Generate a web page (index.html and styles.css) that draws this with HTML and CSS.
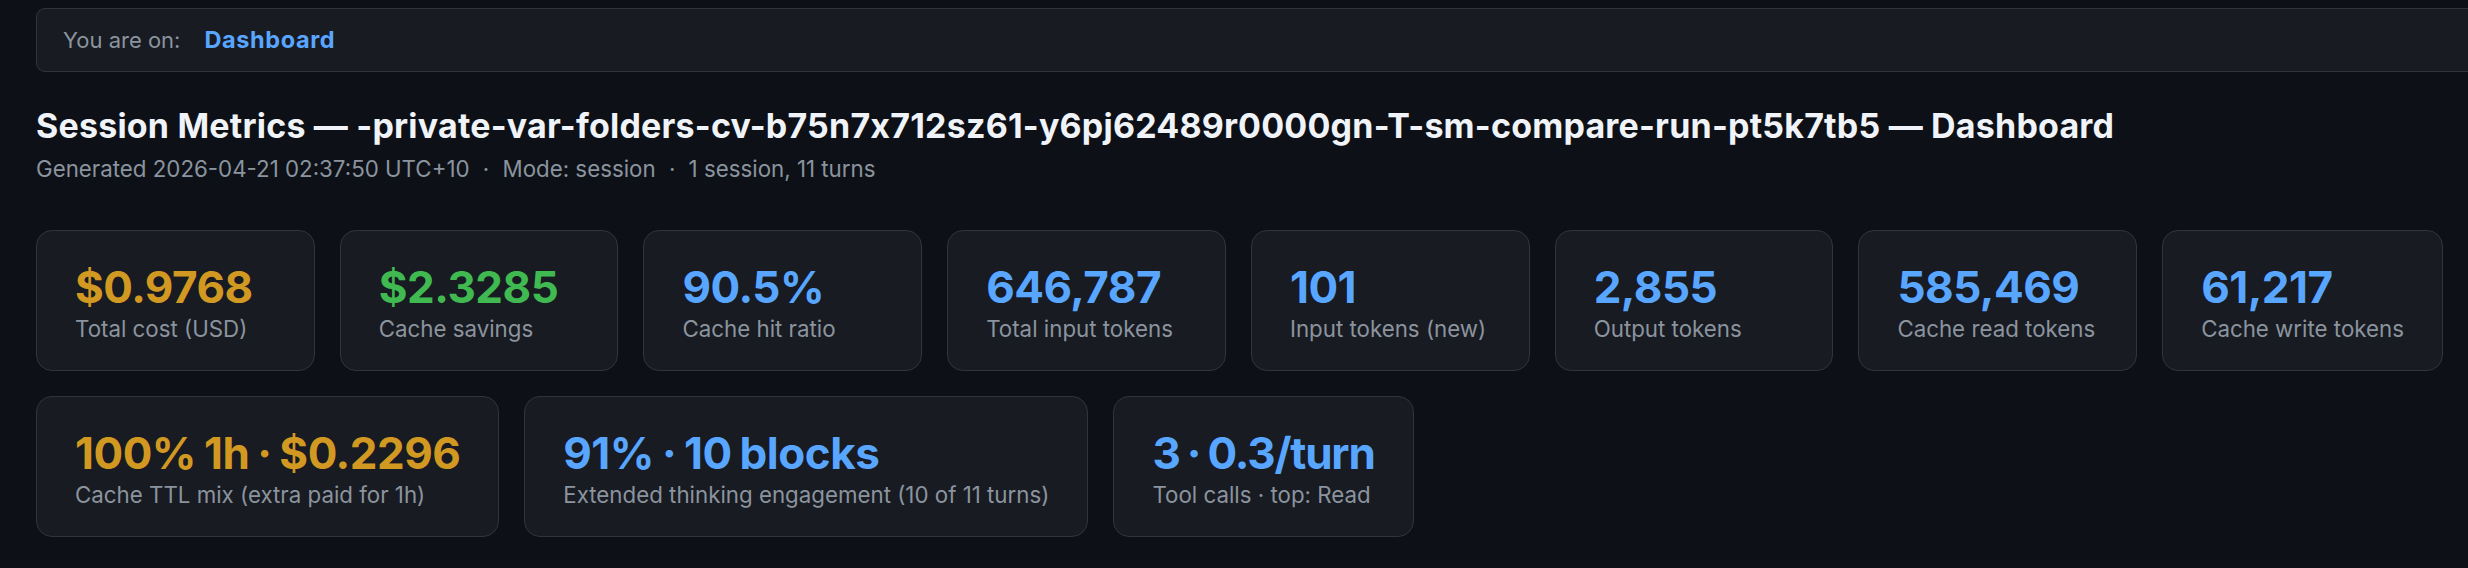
FILE: index.html
```html
<!DOCTYPE html>
<html lang="en">
<head>
<meta charset="utf-8">
<title>Session Metrics — Dashboard</title>
<link rel="stylesheet" href="styles.css">
</head>
<body>
<div class="page">
  <nav class="crumb">
    <span class="crumb-label">You are on:</span>
    <span class="crumb-current">Dashboard</span>
  </nav>

  <header class="head">
    <h1 class="title">Session Metrics — -private-var-folders-cv-b75n7x712sz61-y6pj62489r0000gn-T-sm-compare-run-pt5k7tb5 — Dashboard</h1>
    <p class="meta">Generated 2026-04-21 02:37:50 UTC+10 <span class="sep">·</span> Mode: session <span class="sep">·</span> 1 session, 11 turns</p>
  </header>

  <section class="cards cards-main">
    <div class="card"><div class="value gold">$0.9768</div><div class="label">Total cost (USD)</div></div>
    <div class="card"><div class="value green">$2.3285</div><div class="label">Cache savings</div></div>
    <div class="card"><div class="value blue">90.5%</div><div class="label">Cache hit ratio</div></div>
    <div class="card"><div class="value blue">646,787</div><div class="label">Total input tokens</div></div>
    <div class="card"><div class="value blue">101</div><div class="label">Input tokens (new)</div></div>
    <div class="card"><div class="value blue">2,855</div><div class="label">Output tokens</div></div>
    <div class="card"><div class="value blue">585,469</div><div class="label">Cache read tokens</div></div>
    <div class="card"><div class="value blue">61,217</div><div class="label">Cache write tokens</div></div>
  </section>

  <section class="cards cards-extra">
    <div class="card"><div class="value gold">100% 1h · $0.2296</div><div class="label">Cache TTL mix (extra paid for 1h)</div></div>
    <div class="card"><div class="value blue">91% · 10 blocks</div><div class="label">Extended thinking engagement (10 of 11 turns)</div></div>
    <div class="card"><div class="value blue tight">3 · 0.3/turn</div><div class="label">Tool calls · top: Read</div></div>
  </section>
</div>
</body>
</html>
```

FILE: styles.css
```css
html, body {
  margin: 0;
  padding: 0;
  background: #0d1117;
  overflow: hidden;
}

body {
  font-family: Inter, "Noto Sans", "Liberation Sans", sans-serif;
  color: #e6edf3;
}

.page {
  padding: 8px 25px 40px 36px;
}

.crumb {
  display: flex;
  align-items: baseline;
  gap: 24px;
  margin-right: -80px;
  padding: 17px 26px;
  background: #181b22;
  border: 1px solid #30343c;
  border-radius: 9px;
  font-size: 22px;
  line-height: 27px;
}

.crumb-label {
  color: #8b949e;
}

.crumb-current {
  color: #58a6ff;
  font-weight: 700;
  font-size: 23.5px;
  letter-spacing: 0.6px;
}

.head {
  margin-top: 34px;
}

.title {
  margin: 0;
  font-size: 34px;
  line-height: 40px;
  font-weight: 700;
  color: #f0f3f8;
  letter-spacing: 0.2px;
  white-space: nowrap;
}

.meta {
  margin: 10px 0 0;
  font-size: 22.3px;
  line-height: 26px;
  color: #8b949e;
}

.sep {
  padding: 0 7px;
}

.cards {
  gap: 25px;
}

.cards-main {
  display: grid;
  grid-template-columns: repeat(8, 1fr);
  margin-top: 48px;
}

.cards-extra {
  display: flex;
  flex-wrap: wrap;
  margin-top: 25px;
}

.card {
  background: #181b22;
  border: 1px solid #30343c;
  border-radius: 16px;
  padding: 30px 38px 28px;
  box-sizing: border-box;
  height: 141px;
}

.value {
  font-size: 44px;
  line-height: 53px;
  font-weight: 700;
  letter-spacing: -0.5px;
  word-spacing: -2px;
  white-space: nowrap;
}

.value.tight {
  letter-spacing: -1.2px;
}

.label {
  margin-top: 1px;
  font-size: 22.3px;
  line-height: 27px;
  color: #8b949e;
  white-space: nowrap;
}

.gold { color: #d29922; }
.green { color: #3fb950; }
.blue { color: #58a6ff; }
```
